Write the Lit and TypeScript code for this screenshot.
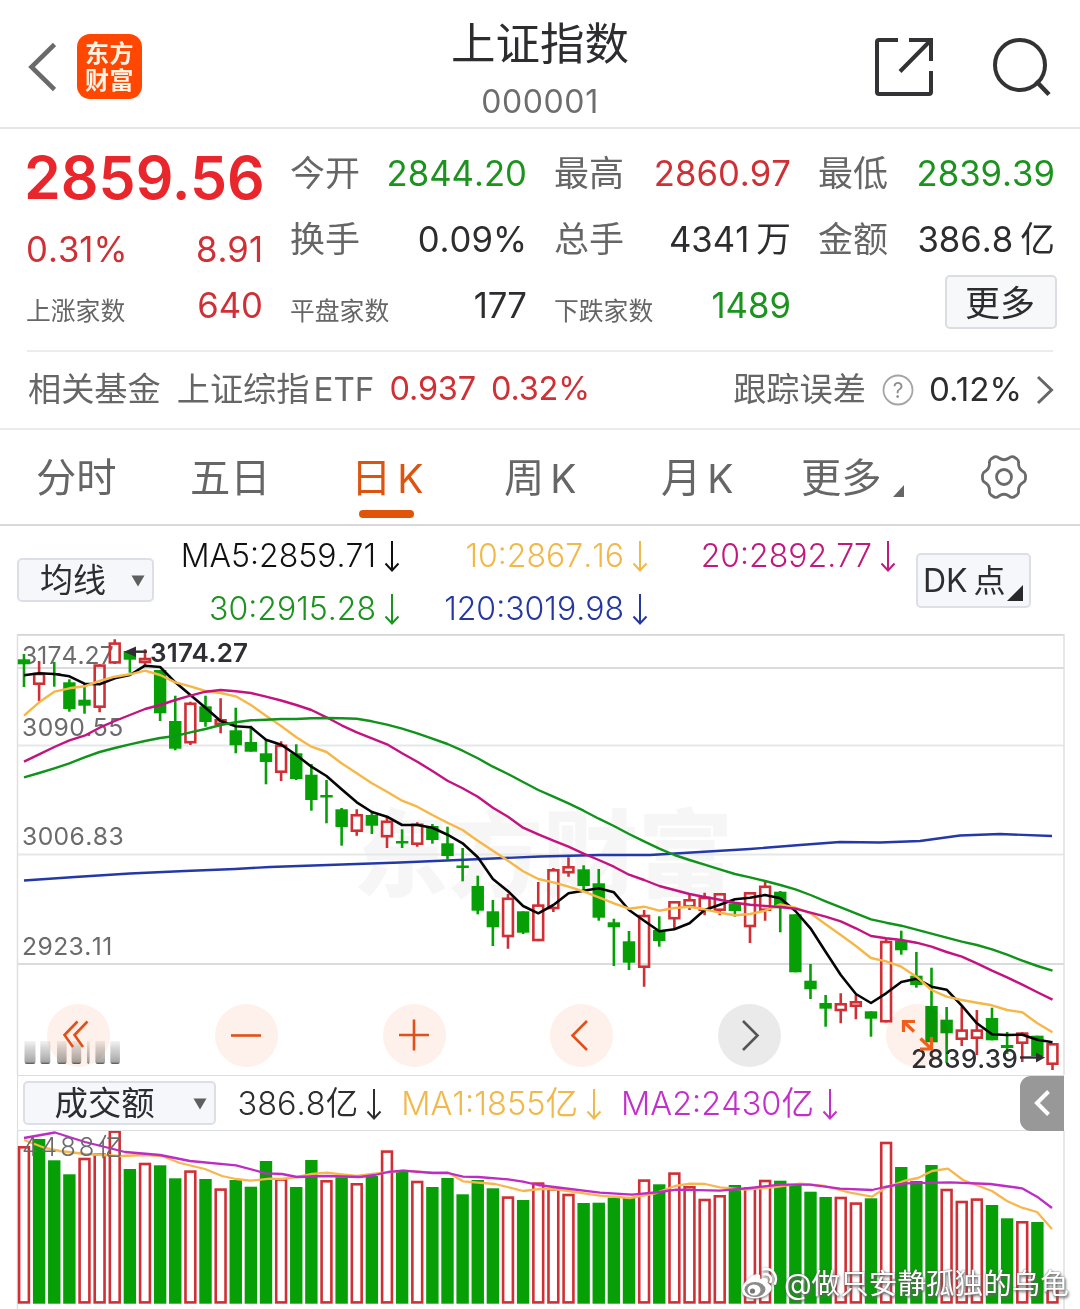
import { LitElement, html, css, svg } from "lit";
import { customElement } from "lit/decorators.js";

// [direction, high, body top, body bottom, low] in chart canvas units
type Candle = [string, number, number, number, number];
const CANDLES: Candle[] = [
  ["g", 654, 659.3, 664.3, 687], ["r", 661, 672.7, 685, 701], ["g", 662, 673, 675, 686.7],
  ["g", 679.3, 682.3, 709, 711.7], ["g", 683.7, 699.7, 705.7, 713.7], ["r", 664.3, 664.3, 708, 712.3],
  ["r", 639.3, 642.3, 663.7, 664], ["g", 651, 651, 659.7, 672.7], ["r", 649.3, 657.7, 663.3, 666.3],
  ["g", 670, 670, 713.3, 721], ["g", 695.7, 721, 748.7, 750.3], ["r", 701.7, 702.5, 743.5, 745],
  ["g", 695.7, 706.3, 722, 726.7], ["r", 698.3, 719, 725, 733.3], ["g", 707.7, 730.3, 745.3, 753.3],
  ["g", 725.7, 742, 751.7, 751.7], ["g", 739.7, 753.3, 762, 784.3], ["r", 741.3, 744.5, 773, 781],
  ["g", 744.3, 753.3, 779, 780], ["g", 764, 774.7, 800, 810.7], ["g", 780, 795, 797.5, 823.3],
  ["g", 808, 809.3, 827, 845.7], ["r", 809.3, 814, 832, 835.7], ["g", 811, 815, 825.7, 834],
  ["r", 816, 820.5, 837.5, 848], ["g", 829.3, 841, 843.5, 848], ["r", 822.3, 823.5, 845, 846.7],
  ["g", 824, 826, 840, 843.7], ["g", 826.7, 843.3, 856, 859.3], ["g", 848, 865.5, 868, 881.3],
  ["g", 875.7, 886, 910.7, 914.3], ["g", 900, 911.3, 927.3, 946], ["r", 894, 897.5, 937.3, 948.7],
  ["g", 911.3, 911.3, 932.7, 934], ["r", 882, 904.3, 941.3, 941.3], ["r", 868, 869, 909.3, 912],
  ["r", 857.3, 866, 873.5, 876.7], ["g", 865.3, 869.3, 886, 890], ["g", 869, 883.3, 917.7, 920.7],
  ["g", 918.7, 922.3, 927.3, 966], ["g", 931, 941.3, 962.7, 970], ["r", 910, 914.7, 968, 986.7],
  ["g", 916.3, 930, 941, 946.7], ["r", 901, 901, 919.5, 930], ["r", 893.3, 899, 907.5, 910],
  ["r", 892.7, 896.7, 911, 915.3], ["r", 893, 893, 911, 915.3], ["g", 902, 903.3, 911, 916.7],
  ["r", 892, 892, 927.3, 943], ["r", 882, 885.5, 911, 920.7], ["g", 891, 891.7, 908.3, 932.3],
  ["g", 914.3, 914.3, 972.3, 972.3], ["g", 964, 980.7, 989.3, 999], ["g", 995, 1003, 1008.7, 1026.7],
  ["r", 993.3, 1003, 1011.3, 1023.3], ["r", 995, 1001, 1007, 1019.3], ["g", 1011.3, 1011.3, 1018.7, 1036.7],
  ["r", 939, 940.7, 1022.5, 1022.5], ["g", 930.7, 940.3, 950.3, 954.7], ["g", 952, 975.7, 985, 987.7],
  ["g", 967.7, 1006, 1042.3, 1042.3], ["g", 1007, 1019.7, 1033.3, 1063], ["r", 1006.7, 1029.3, 1040, 1046],
  ["r", 1010, 1029.3, 1039, 1055], ["g", 1007.7, 1018, 1040.3, 1040.3], ["g", 1032, 1045, 1048, 1054],
  ["r", 1032.3, 1032.3, 1044, 1062], ["g", 1035.7, 1035.7, 1056, 1056], ["r", 1043, 1043, 1065, 1070],
];

const MA5 = [675.3, 673.3, 674, 676.3, 683.7, 684.3, 678.3, 675, 665.7, 667, 682.3, 695, 707.7, 721, 726.3, 727.3, 739.7, 744.7, 755, 766.7, 776, 789.3, 802.3, 812, 816.7, 825, 825, 827.7, 834.7, 843.3, 857.3, 879, 891.3, 906, 913.3, 905, 893.3, 890.7, 888.3, 892.3, 910, 920.7, 931.3, 929.3, 923.3, 910, 904.7, 899.3, 897.7, 895, 898.3, 911, 928.3, 951.7, 975, 994, 1003, 993.3, 982, 978.7, 986.7, 989.7, 1005.7, 1023.3, 1034.3, 1035, 1034.7, 1039.7, 1042.3];
const MA10 = [715.7, 702.3, 691.7, 688.3, 686.3, 681, 676.7, 674.3, 670.7, 675, 682.3, 686.3, 691, 693, 696.3, 705, 715.7, 726, 737.3, 746.7, 752, 763.3, 773.3, 783.3, 791.7, 800.7, 806.7, 815, 822.7, 830, 840.7, 850.7, 860.7, 871.3, 879, 882.3, 886.7, 891.3, 897.3, 903.3, 908.7, 906.7, 910.7, 908, 906.7, 909.3, 912.7, 915.3, 914, 910.7, 904.3, 907.7, 913.3, 924.3, 935, 946, 958, 961.3, 966.7, 976.7, 990, 996.7, 1000, 1002.7, 1005.3, 1010, 1012.3, 1023.3, 1032.3];
const MA20 = [761.7, 754.3, 747, 740.3, 735.7, 727.7, 721, 715, 709, 705, 700, 695.7, 691.7, 690, 691.3, 693, 696.7, 700.5, 705, 710, 717.3, 725.3, 732.3, 738.3, 744.3, 753.3, 761.7, 771, 780.7, 788.3, 796.7, 807.7, 816.7, 827.7, 834.3, 840.7, 846.7, 853.7, 860, 866.7, 874.7, 880, 886, 890, 894, 897, 899.7, 902.7, 904.7, 906, 907, 908.7, 912.7, 916.7, 921.3, 928.3, 936, 938.3, 940, 942.7, 946.7, 952, 956.7, 963.3, 970.7, 977.3, 984.7, 992.3, 999.7];
const MA30 = [777.3, 773, 768.3, 763.3, 757.3, 752, 748, 744.3, 741, 738, 736, 732.3, 729, 725, 722.3, 720.3, 719.7, 719, 719, 718.3, 718, 718.3, 718.7, 721.3, 724.7, 728.7, 733.3, 738.7, 744, 750.7, 758.3, 766.7, 774, 782, 790, 796.7, 803.3, 810.7, 818.7, 826, 834, 841.3, 848.7, 855, 860, 864.7, 869.3, 874, 877.3, 881, 885, 889.3, 895, 901.3, 907.3, 913.3, 919.3, 922.7, 925.7, 929.7, 933.7, 937.7, 941.7, 945, 949.3, 954.7, 960.7, 966, 970.7];
const MA120 = "24,880.5 75,877 130,873.5 185,871 235,869 270,867 400,862.5 470,859.5 540,856.5 600,855 650,855 700,852 750,849 800,845 840,842 880,842.5 920,841 960,835.5 1000,834 1052,836";

const VOLUME: number[] = [1146, 1139, 1160.3, 1174.3, 1157.7, 1153.3, 1130.3, 1169, 1162.7, 1165.3, 1178.3, 1170.3, 1179, 1188.3, 1180, 1186.7, 1161, 1178.3, 1187, 1160, 1180, 1177.3, 1183, 1176, 1150.3, 1171, 1180.7, 1187, 1178, 1194.3, 1180, 1188.3, 1196.3, 1200, 1182.3, 1188, 1193.7, 1203, 1202.7, 1197.7, 1197.7, 1179.3, 1184.3, 1172.3, 1186, 1198.7, 1195, 1185, 1187.3, 1179.7, 1180.7, 1184, 1191.7, 1197, 1196.7, 1202.3, 1198.3, 1141.7, 1167, 1181, 1165, 1188.7, 1200.7, 1198.3, 1205, 1218.3, 1221, 1222, 1288];
const VOLUME_DIR = "rgggrrrgrggrgrggg" + "rggrgrgrgrgggggrgr" + "rrggggrgrrrrgrrggggrrgrgggrrrggrgr";
const VMA1 = "24,1140 45,1148 60,1151 85,1154 120,1156 145,1155 162,1156 180,1163 205,1169 222,1176 236,1179 250,1180.7 270,1178.7 282,1179 297,1177 312,1174 327,1172.7 342,1174.5 357,1176 372,1174 388,1172.3 403,1170.7 433,1172.7 448,1172.5 463,1181.3 495,1184 510,1187.7 523,1191 540,1189 554,1189 600,1195.7 630,1198 655,1193.3 675,1186 690,1183.7 705,1184 720,1187.3 745,1189.7 775,1187 800,1183.7 825,1186 850,1192.7 872,1196.7 885,1188 905,1180.7 918,1178 932,1171 948,1168.7 963,1180 992,1191 1007,1201 1022,1207.7 1037,1212 1052,1229";
const VMA2 = "24,1138 55,1132.5 85,1142 125,1152 160,1155 190,1161 236,1165.3 266,1173.3 282,1174 297,1177 327,1176 360,1177 375,1175 388,1172 403,1170.7 433,1173 448,1173 463,1176.7 478,1177 508,1179.3 523,1181.7 538,1185 554,1187 600,1192.7 632,1194.7 660,1192 676,1189.7 720,1190.7 750,1188 780,1184.7 810,1184.7 840,1188.7 872,1190 885,1187 905,1183.3 950,1182.3 990,1184 1022,1188.3 1037,1196.7 1052,1208";

const GREEN = "#069f06";
const RED = "#cf3035";
const xAt = (i: number) => 24 + 15.125 * i;
const series = (v: number[]) => v.map((y, i) => `${xAt(i).toFixed(1)},${y}`).join(" ");

const candle = ([dir, hi, top, bot, lo]: Candle, i: number) => {
  const x = xAt(i);
  if (dir === "g") {
    return svg`<path d="M${x} ${hi}V${lo}" stroke=${GREEN} stroke-width="2.6"/>
      <rect x=${x - 6.2} y=${top} width="12.4" height=${bot - top} fill=${GREEN}/>`;
  }
  const h = Math.max(bot - top - 2.6, 1);
  return svg`<path d="M${x} ${hi}V${top + 1}M${x} ${bot - 1}V${lo}" stroke=${RED} stroke-width="2.6"/>
    <rect x=${x - 4.9} y=${top + 1.3} width="9.8" height=${h} fill="none" stroke=${RED} stroke-width="2.6"/>`;
};

const bar = (top: number, i: number) => {
  const x = xAt(i);
  return VOLUME_DIR[i] === "g"
    ? svg`<rect x=${x - 6.2} y=${top} width="12.4" height=${1303.7 - top} fill=${GREEN}/>`
    : svg`<rect x=${x - 4.9} y=${top + 1.3} width="9.8" height=${1303.7 - top - 2.6} fill="#fff" stroke=${RED} stroke-width="2.6"/>`;
};

const downArrow = html`<svg class="down" width="16" height="32" viewBox="0 0 16 32" fill="none" stroke="currentColor" stroke-width="2"><path d="M8 1V30M1.5 23.5L8 30.5L14.5 23.5"/></svg>`;

@customElement("stock-chart")
class StockChart extends LitElement {
  static styles = css`
    :host { display: block; height: 441px; position: relative; font-family: Inter, "Noto Sans CJK SC", sans-serif; }
    svg { display: block; }
    .axis { font-kerning: none; }
    .controls { position: absolute; left: 47px; right: 131px; top: 370px; display: flex; justify-content: space-between; }
    .round { width: 63px; height: 63px; display: grid; }
    .disc, .round svg { grid-area: 1 / 1; }
    .disc { border-radius: 50%; background: #fef0ea; mix-blend-mode: multiply; }
    .off .disc { background: #eaeaea; }
  `;
  render() {
    const btn = (d: string, off = false, w = 2.6, c = "#e0561a") => html`<div class="round ${off ? "off" : ""}">
      <div class="disc"></div>
      <svg width="63" height="63" viewBox="0 0 63 63" fill="none" stroke=${off ? "#5c5c5c" : c} stroke-width=${w}><path d=${d} /></svg></div>`;
    const smears = [[24.5, 11], [40.3, 10], [57, 9.6], [71.6, 9.6], [87, 2.6], [95.4, 9.6], [110.3, 9.6]];
    return html`
      <svg width="1080" height="441" viewBox="0 634 1080 441">
        <defs>
          <linearGradient id="smear" x1="0" y1="0" x2="0" y2="1">
            <stop offset="0" stop-color="#aaa" stop-opacity=".15" /><stop offset=".3" stop-color="#999" stop-opacity=".4" />
            <stop offset=".9" stop-color="#777" stop-opacity=".65" /><stop offset="1" stop-color="#444" stop-opacity=".95" />
          </linearGradient>
        </defs>
        <text x="353" y="890" font-size="95" font-weight="900" fill="#f6f6f6" font-family="Noto Sans CJK SC">东方财富</text>
        <g stroke="#dfe0e3" stroke-width="2">
          <path d="M17 634.8H1064" stroke="#d3d4d6" /><path d="M17 668H1064M17 964H1064" stroke="#dadbdf" />
          <path d="M17 745.5H1064M17 854.5H1064" stroke="#e6e7e9" />
          <path d="M17.5 634V1075M1064 634V1075" stroke="#e0e0e3" stroke-width="1.5" />
        </g>
        <g class="axis" font-size="24.7" fill="#6b6b6b" letter-spacing=".4">
          <text x="22" y="663.5" textLength="92">3174.27</text><text x="22" y="735.5">3090.55</text>
          <text x="22" y="845">3006.83</text><text x="22" y="954.5">2923.11</text>
        </g>
        ${CANDLES.map(candle)}
        <g fill="none" stroke-width="2.4" stroke-linejoin="round">
          <polyline points=${MA120} stroke="#2438a8" />
          <polyline points=${series(MA5)} stroke="#050505" stroke-width="2.6" />
          <polyline points=${series(MA10)} stroke="#f6b747" />
          <polyline points=${series(MA20)} stroke="#c4137f" />
          <polyline points=${series(MA30)} stroke="#10931a" />
        </g>
        <g font-size="26" font-weight="600" fill="#2f2f33">
          <text x="150" y="661.5" textLength="98">3174.27</text>
          <text x="911" y="1067.5" font-weight="500" textLength="107">2839.39</text>
        </g>
        <g stroke="#2f2f33" stroke-width="2.4" fill="#2f2f33">
          <path d="M128 651.7H147" /><path d="M124 651.7L136 646.5V657Z" stroke="none" />
          <path d="M1020 1057.5H1038" /><path d="M1045 1057.5L1036 1052.5V1062.5Z" stroke="none" />
        </g>
        ${smears.map(([x, w]) => svg`<path d="M${x} 1041H${x + w}V1061Q${x + w} 1064 ${x + w - 2} 1064H${x + Math.min(2, w / 2)}Q${x} 1064 ${x} 1061Z" fill="url(#smear)"/>`)}
      </svg>
      <div class="controls">
        ${btn("M30.500 17.500L17.500 31L26 43M40.500 17.500L27.500 31L36 43")}
        ${btn("M16 31.5H46")}
        ${btn("M16 31H46M31 15.5V46.5")}
        ${btn("M37 17L22.5 31.5L37 46")}
        ${btn("M25 17L39.5 31.5L25 46", true)}
        ${btn("M17.500 28V17.500H29M17.500 17.500L28 27.500M34.500 34.500L45 44.500M45.500 33V45H34", false, 3.2, "#f0641c")}
      </div>`;
  }
}

@customElement("app-root")
class AppRoot extends LitElement {
  static styles = css`
    :host { display: block; width: 1080px; height: 1309px; overflow: hidden; background: #fff; position: relative;
      font-family: Inter, "Noto Sans CJK SC", sans-serif; line-height: 1; color: #2d2d30; }
    * { box-sizing: border-box; }
    svg { display: block; flex: none; }
    header { height: 129px; border-bottom: 2px solid #e6e6e6; display: grid; grid-template-columns: 1fr 240px 1fr; padding: 0 28px; }
    .left, .right { display: flex; align-items: center; padding-top: 6px; }
    .right { justify-content: flex-end; gap: 58px; }
    .logo { width: 65px; height: 65px; margin-left: 21px; border-radius: 13px; background: #ff4702; color: #fff3e4;
      font-weight: 700; font-size: 24px; line-height: 27px; text-align: center; padding-top: 6px; letter-spacing: .4px; white-space: pre-line; }
    .title { display: flex; flex-direction: column; align-items: center; padding-top: 22px; }
    .name { font-size: 44.5px; font-weight: 400; white-space: nowrap; }
    .code { font-size: 32px; color: #6d6d6d; margin-top: 19px; letter-spacing: .6px; }

    .quote { display: flex; gap: 27px; padding: 11px 25px 0 26px; height: 221px; }
    .col { width: 237px; display: flex; flex-direction: column; }
    .line { height: 66px; display: flex; align-items: center; justify-content: space-between; font-size: 34.7px; white-space: nowrap; }
    .line .val { font-kerning: none; display: flex; gap: 7px; }
    .key { font-size: 35px; color: #666; font-weight: 370; padding-top: 1px; }
    .key.small { font-size: 24.8px; padding-top: 13px; }
    .big { height: 74px; font-size: 59px; font-weight: 600; color: #e8262b; }
    .big span { margin-left: -2px; }
    .mid { height: 70px; }
    .low { height: 42px; }
    .red { color: #cf3035; }
    .green { color: #1c931f; }
    .more { width: 112px; height: 54px; margin: 3px -2px 0 auto; padding: 2px 2px 0 0; border: 2px solid #dcdde2; border-radius: 5px; background: #f7f8fa; display: grid; place-items: center; font-size: 35px; }

    .fund { margin: 0 27px; height: 78px; border-top: 2px solid #ececec; display: flex; align-items: center; padding: 0 0 1px 1px; font-size: 33.2px; color: #666; white-space: nowrap; }
    .fund .cn { font-weight: 370; }
    .fund .etf { margin-left: 16px; display: flex; gap: 4px; }
    .fund .num { margin-left: 15px; font-size: 32.5px; letter-spacing: -.2px; }
    .fund .err { margin-left: auto; }
    .fund .help { margin: 0 15px 0 16px; }
    .fund .pct { color: #2d2d30; }
    .fund .go { margin-left: 14px; margin-right: -1px; }
    .tabs { height: 98px; border-top: 2px solid #ebebeb; border-bottom: 2px solid #d9d9dc; display: grid; grid-template-columns: 154px 161px 153px 157px 140px 180px 46px; align-items: center; padding-left: 36px; font-size: 40.3px; color: #666; white-space: nowrap; }
    .tab { height: 100%; display: flex; align-items: center; gap: 6px; padding-top: 2px; position: relative; }
    .tab span { font-size: 39px; }
    .tab.on { color: #de540f; }
    .tab.on::after { content: ""; position: absolute; left: 8px; top: 80px; width: 55px; height: 8px; border-radius: 4px; background: #e0540a; }
    .corner { align-self: flex-end; margin: 0 0 27px 5px; }

    .avg { height: 108px; display: flex; padding-left: 17px; }
    .select { border: 2px solid #dcdfe6; border-radius: 5px; background: #f6f7fa; display: flex; align-items: center; justify-content: space-between; font-size: 33px; white-space: nowrap; }
    .avg .select { width: 137px; height: 44px; margin-top: 32px; padding: 1px 7px 0 21px; }
    .legend { display: grid; grid-template-columns: 246px 248px 248px; grid-auto-rows: 53px; padding-top: 3px; justify-items: end; align-items: center; font-size: 32px; font-weight: 300; font-kerning: none; }
    .item { display: flex; align-items: center; gap: 8px; white-space: nowrap; }
    .avg .dk { width: 115px; height: 55px; margin: 27px 0 0 20px; padding: 0 6px 0 5px; font-size: 32px; word-spacing: -3px; }
    .dk svg { align-self: flex-end; margin-bottom: 5px; }
    .black { color: #111; } .gold { color: #f1b84a; } .pink { color: #c01a80; } .leaf { color: #1c931f; } .navy { color: #2438a0; } .violet { color: #c32fcb; }

    .volhead { height: 56px; margin: 0 16px 0 17px; border: 1.5px solid #dcdde2; display: flex; align-items: center; padding-left: 4.5px; font-size: 32.5px; font-weight: 330; font-kerning: none; }
    .volhead .select { width: 193px; height: 44px; padding: 1px 7px 0 30px; font-weight: 400; font-size: 33.4px; margin-right: 22px; }
    .volhead .item { margin-right: 19px; gap: 8px; padding-top: 2px; }
    .fold { margin: 0 -1px 0 auto; width: 44px; height: 55px; border-radius: 11px 0 0 11px; background: #989898; display: grid; place-items: center; }
    .mark { position: absolute; left: 740px; top: 1266px; display: flex; align-items: center; gap: 6px; color: #fff; font-size: 28.6px; white-space: nowrap; text-shadow: 0 0 2px #555, 1px 2px 3px #666; }
    .mark svg { filter: drop-shadow(0 1px 1.5px #666); }
  `;

  render() {
    const tri = html`<svg width="14" height="12" viewBox="0 0 14 12"><path d="M.5 .5H13.5L7 11.5Z" fill="#5f5f5f" /></svg>`;
    const item = (t: string, c: string) => html`<div class="item ${c}"><span>${t}</span>${downArrow}</div>`;
    const row = (k: string, v: string, c = "", unit = "") =>
      html`<div class="line"><span class="key">${k}</span><span class="val ${c}">${v}${unit ? html`<span>${unit}</span>` : ""}</span></div>`;
    const small = (k: string, v: string, c = "") => html`<div class="line"><span class="key small">${k}</span><span class="val ${c}">${v}</span></div>`;
    return html`
      <header>
        <div class="left">
          <svg width="28" height="50" viewBox="0 0 28 50" fill="none" stroke="#6a6a6a" stroke-width="4.6"><path d="M26.500 2.500L3.500 25L26.500 47.500" /></svg>
          <div class="logo">${"东方\n财富"}</div>
        </div>
        <div class="title"><div class="name">上证指数</div><div class="code">000001</div></div>
        <div class="right">
          <svg width="60" height="60" viewBox="0 0 60 60" fill="none" stroke="#333336" stroke-width="4"><path d="M24 3H5Q3 3 3 5V55Q3 57 5 57H55Q57 57 57 55V34M35 3H57V24M57 3L26 34.500" /></svg>
          <svg width="60" height="60" viewBox="0 0 60 60" fill="none" stroke="#333336" stroke-width="4"><circle cx="28" cy="28" r="25" /><path d="M44 44L57 57.500" stroke-width="4.500" /></svg>
        </div>
      </header>
      <section class="quote">
        <div class="col">
          <div class="line big"><span>2859.56</span></div>
          <div class="line mid red"><span class="val">0.31%</span><span class="val">8.91</span></div>
          <div class="line low"><span class="key small">上涨家数</span><span class="val red">640</span></div>
        </div>
        <div class="col">${row("今开", "2844.20", "green")}${row("换手", "0.09%")}${small("平盘家数", "177")}</div>
        <div class="col">${row("最高", "2860.97", "red")}${row("总手", "4341", "", "万")}${small("下跌家数", "1489", "green")}</div>
        <div class="col">${row("最低", "2839.39", "green")}${row("金额", "386.8", "", "亿")}<div class="more">更多</div></div>
      </section>
      <section class="fund">
        <span class="cn">相关基金</span><span class="cn etf">上证综指<span>ETF</span></span><span class="num red">0.937</span><span class="num red">0.32%</span>
        <span class="cn err">跟踪误差</span>
        <svg class="help" width="32" height="32" viewBox="0 0 32 32"><circle cx="16" cy="16" r="14.500" fill="none" stroke="#a4a4a4" stroke-width="1.800" /><text x="16" y="23.500" text-anchor="middle" font-size="21" fill="#8f8f8f">?</text></svg>
        <span class="pct">0.12%</span>
        <svg class="go" width="18" height="30" viewBox="0 0 18 30" fill="none" stroke="#666" stroke-width="3"><path d="M2 2L15.500 15L2 28" /></svg>
      </section>
      <nav class="tabs">
        <div class="tab">分时</div><div class="tab">五日</div><div class="tab on">日<span>K</span></div><div class="tab">周<span>K</span></div><div class="tab">月<span>K</span></div>
        <div class="tab">更多<svg class="corner" width="11" height="12" viewBox="0 0 11 12"><path d="M11 0V12H0Z" fill="#666" /></svg></div>
        <svg width="46" height="46" viewBox="0 0 46 46" fill="none" stroke="#6a6a6a" stroke-width="2.800" stroke-linejoin="round"><path d="M13.500 2.800Q16 2 18 4Q23 7.500 28 4Q30 2 32.500 2.800L36 5Q38 6.500 37.500 9.500Q37.500 15 42 17.500Q44.500 19 44.500 21V25Q44.500 27 42 28.500Q37.500 31 37.500 36.500Q38 39.500 36 41L32.500 43.200Q30 44 28 42Q23 38.500 18 42Q16 44 13.500 43.200L10 41Q8 39.500 8.500 36.500Q8.500 31 4 28.500Q1.500 27 1.500 25V21Q1.500 19 4 17.500Q8.500 15 8.500 9.500Q8 6.500 10 5Z" /><circle cx="23" cy="23" r="7.500" /></svg>
      </nav>
      <section class="avg">
        <div class="select"><span>均线</span>${tri}</div>
        <div class="legend">
          ${item("MA5:2859.71", "black")}${item("10:2867.16", "gold")}${item("20:2892.77", "pink")}
          ${item("30:2915.28", "leaf")}${item("120:3019.98", "navy")}
        </div>
        <div class="select dk"><span>DK 点</span><svg width="16" height="16" viewBox="0 0 16 16"><path d="M16 0V16H0Z" fill="#28282b" /></svg></div>
      </section>
      <stock-chart></stock-chart>
      <section class="volhead">
        <div class="select"><span>成交额</span>${tri}</div>
        ${item("386.8亿", "")}${item("MA1:1855亿", "gold")}${item("MA2:2430亿", "violet")}
        <div class="fold"><svg width="18" height="28" viewBox="0 0 18 28" fill="none" stroke="#fff" stroke-width="4"><path d="M15.500 2.500L4 14L15.500 25.500" /></svg></div>
      </section>
      <svg width="1080" height="178" viewBox="0 1131 1080 178">
        <path d="M17.500 1130V1309M1064 1130V1309" stroke="#e0e0e3" stroke-width="1.500" />
        ${VOLUME.map(bar)}
        <g fill="none" stroke-width="2.300" stroke-linejoin="round"><polyline points=${VMA1} stroke="#f7b64e" /><polyline points=${VMA2} stroke="#bd2cc5" /></g>
        <text x="22" y="1156" font-size="25.500" font-weight="350" fill="#6b6b6b" textLength="101">4488亿</text>
      </svg>
      <div class="mark">
        <svg width="38" height="36" viewBox="0 0 38 36"><path d="M14 9C19 6.500 21 9 20 13C25 11 29 12 27.500 17C32 19 33 23 29 27C22 34 8 34 3 28C-1 22 6 13 14 9Z" fill="#fff" /><ellipse cx="15" cy="23.500" rx="10.500" ry="7.500" fill="#8a8a8a" /><ellipse cx="14" cy="24" rx="6.500" ry="5.500" fill="#fff" /><circle cx="12.500" cy="25" r="2.600" fill="#777" /><path d="M24 8.500C29 7.500 32 11 30.500 16M23 3.500C32 1 38 9 35 17.500" fill="none" stroke="#fff" stroke-width="2.600" stroke-linecap="round" /></svg>
        <span>@做只安静孤独的乌龟</span>
      </div>`;
  }
}
